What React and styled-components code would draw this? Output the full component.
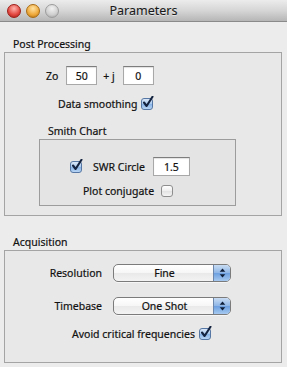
import React from "react";
import styled, { createGlobalStyle } from "styled-components";

const GlobalStyle = createGlobalStyle`
  html, body {
    margin: 0;
    padding: 0;
    background: #ececec;
  }
  body {
    font-family: "Noto Sans", "Liberation Sans", sans-serif;
    font-size: 10.5px;
    color: #111;
    -webkit-text-stroke: 0.2px #111;
  }
`;

export default function App() {
  return (
    <Window>
      <GlobalStyle />
      <TitleBar>
        <Lights>
          <Light color="red" />
          <Light color="orange" />
          <Light color="grey" />
        </Lights>
        <Title>Parameters</Title>
        <span />
      </TitleBar>

      <Content>
        <SectionLabel top={15} indent={9}>Post Processing</SectionLabel>
        <GroupBox pad={9}>
          <Row top={13} indent={41} height={19}>
            <Label>Zo</Label>
            <Field w={31} gap={8}>50</Field>
            <Label gap={6}>+ j</Label>
            <Field w={31} gap={8}>0</Field>
          </Row>
          <Row top={13} indent={53} height={12}>
            <Label>Data smoothing</Label>
            <Checkbox checked gap={4} />
          </Row>

          <SectionLabel top={14} indent={43}>Smith Chart</SectionLabel>
          <SubBox>
            <Row top={17} indent={30} height={19}>
              <Checkbox checked />
              <Label gap={11}>SWR Circle</Label>
              <Field w={37} gap={8}>1.5</Field>
            </Row>
            <Row top={9} indent={43} height={12}>
              <Label>Plot conjugate</Label>
              <Checkbox gap={7} />
            </Row>
          </SubBox>
        </GroupBox>

        <SectionLabel top={19} indent={9}>Acquisition</SectionLabel>
        <GroupBox pad={22}>
          <Row top={13} height={18}>
            <RightLabel>Resolution</RightLabel>
            <Popup value="Fine" />
          </Row>
          <Row top={15} height={18}>
            <RightLabel>Timebase</RightLabel>
            <Popup value="One Shot" />
          </Row>
          <Row top={13} indent={67} height={12}>
            <Label>Avoid critical frequencies</Label>
            <Checkbox checked gap={4} />
          </Row>
        </GroupBox>
      </Content>
    </Window>
  );
}

function Checkbox({ checked, gap }) {
  return (
    <Box checked={checked} gap={gap}>
      {checked && (
        <svg width="14" height="14" viewBox="0 0 14 14">
          <path
            d="M3 6.5 L5.6 10 L11.5 0.8"
            fill="none"
            stroke="#14233f"
            strokeWidth="2.1"
            strokeLinecap="round"
            strokeLinejoin="round"
          />
        </svg>
      )}
    </Box>
  );
}

function Popup({ value }) {
  return (
    <PopupButton>
      <PopupText>{value}</PopupText>
      <PopupArrows>
        <svg width="7" height="10" viewBox="0 0 7 10">
          <path d="M3.5 0.5 L6.3 3.8 L0.7 3.8 Z" fill="#0e1d38" />
          <path d="M3.5 9.5 L6.3 6.2 L0.7 6.2 Z" fill="#0e1d38" />
        </svg>
      </PopupArrows>
    </PopupButton>
  );
}

const lightColors = {
  red: ["#ffb3ad", "#e2463f", "#9c1d17"],
  orange: ["#ffe3a3", "#eea83a", "#a86b12"],
  grey: ["#f2f2f2", "#cfcfcf", "#9c9c9c"],
};

const Window = styled.div`
  width: 287px;
  height: 367px;
  display: flex;
  flex-direction: column;
  background: #ececec;
  overflow: hidden;
`;

const TitleBar = styled.div`
  height: 21px;
  border-bottom: 1px solid #8a8a8a;
  background: linear-gradient(#ececec, #d6d6d6 50%, #b6b6b6);
  display: grid;
  grid-template-columns: 1fr auto 1fr;
  align-items: center;
`;

const Lights = styled.div`
  display: flex;
  gap: 5px;
  padding-left: 7px;
`;

const Light = styled.span`
  width: 14px;
  height: 14px;
  border-radius: 50%;
  box-sizing: border-box;
  border: 1px solid ${(p) => lightColors[p.color][2]};
  background: radial-gradient(
    circle at 50% 30%,
    ${(p) => lightColors[p.color][0]} 0%,
    ${(p) => lightColors[p.color][1]} 60%,
    ${(p) => lightColors[p.color][2]} 100%
  );
`;

const Title = styled.div`
  font-size: 12.5px;
  color: #1a1a1a;
  -webkit-text-stroke: 0.1px #1a1a1a;
  text-shadow: 0 1px 0 rgba(255, 255, 255, 0.5);
`;

const Content = styled.div`
  display: flex;
  flex-direction: column;
  padding: 0 5px 0 4px;
`;

const SectionLabel = styled.div`
  line-height: 14px;
  margin-top: ${(p) => p.top}px;
  margin-bottom: 1px;
  padding-left: ${(p) => p.indent}px;
`;

const GroupBox = styled.div`
  display: flex;
  flex-direction: column;
  border: 1px solid #a4a4a4;
  background: #e8e8e8;
  padding-bottom: ${(p) => p.pad}px;
`;

const SubBox = styled.div`
  display: flex;
  flex-direction: column;
  width: 197px;
  box-sizing: border-box;
  margin-left: 34px;
  border: 1px solid #9c9c9c;
  background: #e4e4e4;
  padding-bottom: 8px;
`;

const Row = styled.div`
  display: flex;
  align-items: center;
  height: ${(p) => p.height}px;
  margin-top: ${(p) => p.top}px;
  padding-left: ${(p) => p.indent || 0}px;
`;

const Label = styled.span`
  white-space: nowrap;
  margin-left: ${(p) => p.gap || 0}px;
`;

const RightLabel = styled.span`
  width: 97px;
  text-align: right;
  white-space: nowrap;
`;

const Field = styled.div`
  width: ${(p) => p.w}px;
  height: 19px;
  box-sizing: border-box;
  margin-left: ${(p) => p.gap}px;
  display: flex;
  align-items: center;
  justify-content: center;
  background: #fff;
  border: 1px solid #a8a8a8;
  border-top-color: #7d7d7d;
  box-shadow: inset 0 1px 1px rgba(0, 0, 0, 0.12);
`;

const Box = styled.span`
  position: relative;
  width: 12px;
  height: 12px;
  box-sizing: border-box;
  margin-left: ${(p) => p.gap || 0}px;
  border-radius: 3px;
  border: 1px solid ${(p) => (p.checked ? "#5677a3" : "#8e8e8e")};
  background: ${(p) =>
    p.checked
      ? "linear-gradient(#dbe8f8, #a9c9ee 50%, #86b2e6 51%, #b8d4f3)"
      : "linear-gradient(#ffffff, #eeeeee 50%, #e2e2e2 51%, #f4f4f4)"};

  svg {
    position: absolute;
    left: -1px;
    top: -3px;
  }
`;

const PopupButton = styled.div`
  margin-left: 11px;
  width: 118px;
  height: 18px;
  box-sizing: border-box;
  display: flex;
  border: 1px solid #7b7b7b;
  border-radius: 5px;
  overflow: hidden;
  background: linear-gradient(#ffffff, #f6f6f6 50%, #e9e9e9 51%, #f3f3f3);
  box-shadow: 0 1px 0 rgba(255, 255, 255, 0.6);
`;

const PopupText = styled.span`
  flex: 1;
  display: flex;
  align-items: center;
  justify-content: center;
  padding-left: 2px;
`;

const PopupArrows = styled.span`
  width: 16px;
  display: flex;
  align-items: center;
  justify-content: center;
  border-left: 1px solid #6c86ab;
  background: linear-gradient(#c9dcf4, #8db5e6 50%, #6b9fe0 51%, #a6c9f0);
`;
